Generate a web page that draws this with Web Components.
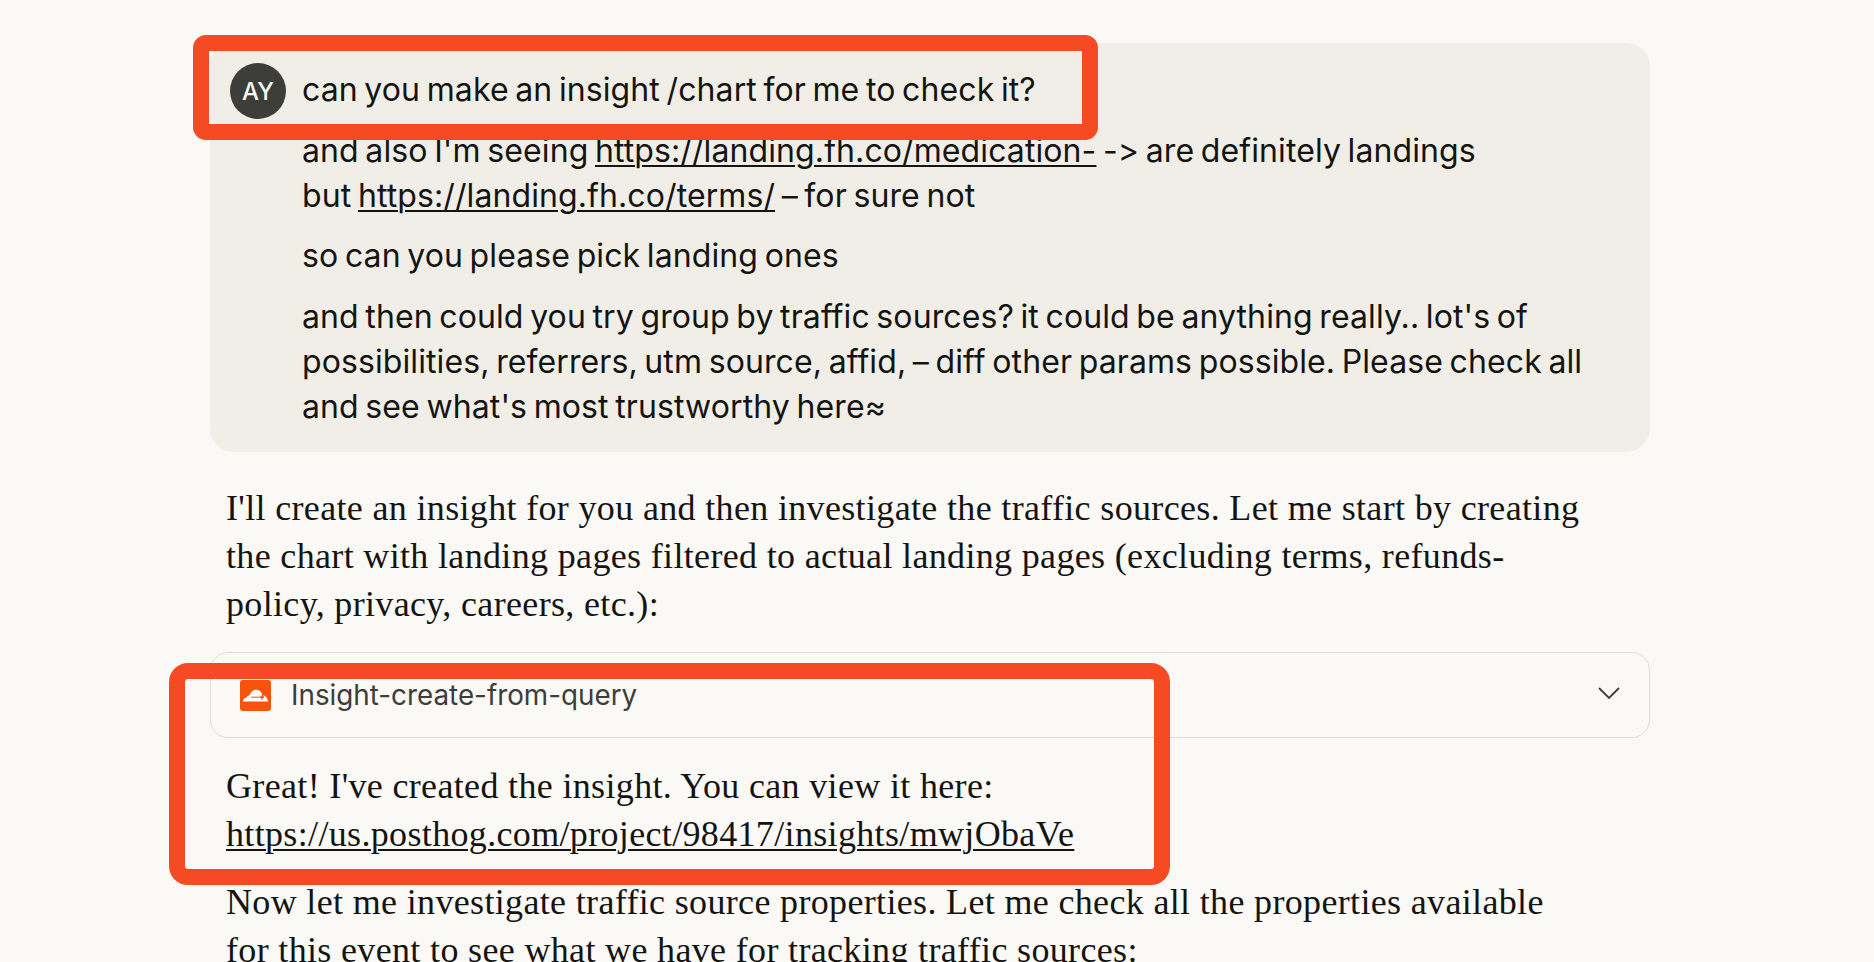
<!DOCTYPE html>
<html lang="en">
<head>
<meta charset="utf-8">
<title>Chat</title>
<style>
  html, body { margin: 0; height: 100%; overflow: hidden; background: #faf9f5; }
  a { color: inherit; text-decoration: underline; text-decoration-thickness: 2px; text-underline-offset: 3px; }
</style>
</head>
<body>
<chat-thread>
  <user-message initials="AY">
    <p>can you make an insight /chart for me to check it?</p>
    <p>and also I'm seeing <a>https://landing.fh.co/medication-</a> -&gt; are definitely landings<br>but <a>https://landing.fh.co/terms/</a> – for sure not</p>
    <p>so can you please pick landing ones</p>
    <p>and then could you try group by traffic sources? it could be anything really.. lot's of<br>possibilities, referrers, utm source, affid, – diff other params possible. Please check all<br>and see what's most trustworthy here≈</p>
  </user-message>
  <assistant-text>I'll create an insight for you and then investigate the traffic sources. Let me start by creating<br>the chart with landing pages filtered to actual landing pages (excluding terms, refunds-<br>policy, privacy, careers, etc.):</assistant-text>
  <tool-card>Insight-create-from-query</tool-card>
  <assistant-text class="flush">Great! I've created the insight. You can view it here:<br><a>https://us.posthog.com/project/98417/insights/mwjObaVe</a></assistant-text>
  <assistant-text class="next">Now let me investigate traffic source properties. Let me check all the properties available<br>for this event to see what we have for tracking traffic sources:</assistant-text>
  <callout-box style="left:193px;top:35px;width:905px;height:105px;--radius:13px"></callout-box>
  <callout-box style="left:169px;top:663px;width:1001px;height:222px"></callout-box>
</chat-thread>

<script>
const threadTemplate = document.createElement('template');
threadTemplate.innerHTML = `
<style>
  :host {
    display: flex;
    flex-direction: column;
    position: relative;
    height: 962px;
    box-sizing: border-box;
    padding: 43px 224px 0 210px;
    overflow: hidden;
  }
  ::slotted(*) { flex: none; }
</style>
<slot></slot>
`;

class ChatThread extends HTMLElement {
  constructor() {
    super();
    this.attachShadow({mode: 'open'});
    this.shadowRoot.appendChild(threadTemplate.content.cloneNode(true));
  }
}

const userTemplate = document.createElement('template');
userTemplate.innerHTML = `
<style>
  :host {
    display: flex;
    gap: 16px;
    padding: 20px 20px 23.5px;
    background: #f0eee6;
    border-radius: 24px;
    color: #141413;
    font-family: "Inter", sans-serif;
    font-size: 32px;
    line-height: 45px;
    letter-spacing: 0.1px;
    word-spacing: -2.5px;
  }
  .avatar {
    flex: none;
    width: 56px;
    height: 56px;
    border-radius: 50%;
    background: #3d3d3a;
    color: #faf9f5;
    font-size: 24px;
    font-weight: 500;
    letter-spacing: 0;
    display: flex;
    align-items: center;
    justify-content: center;
  }
  .body { padding-top: 4px; white-space: nowrap; }
  ::slotted(p) { margin: 0 0 15.5px; }
  ::slotted(p:last-child) { margin-bottom: 0; }
</style>
<div class="avatar"></div>
<div class="body"><slot></slot></div>
`;

class UserMessage extends HTMLElement {
  constructor() {
    super();
    this.attachShadow({mode: 'open'});
    this.shadowRoot.appendChild(userTemplate.content.cloneNode(true));
    this.shadowRoot.querySelector('.avatar').textContent = this.getAttribute('initials');
  }
}

const assistantTemplate = document.createElement('template');
assistantTemplate.innerHTML = `
<style>
  :host {
    display: block;
    margin: 32px 16px 0;
    color: #141413;
    font-family: "Liberation Serif", serif;
    font-size: 36px;
    letter-spacing: 0.34px;
    line-height: 48px;
    white-space: nowrap;
  }
  :host(.flush) { margin-top: 0; }
  :host(.next) { margin-top: 20px; }
</style>
<slot></slot>
`;

class AssistantText extends HTMLElement {
  constructor() {
    super();
    this.attachShadow({mode: 'open'});
    this.shadowRoot.appendChild(assistantTemplate.content.cloneNode(true));
  }
}

const cardTemplate = document.createElement('template');
cardTemplate.innerHTML = `
<style>
  :host {
    display: flex;
    align-items: center;
    box-sizing: border-box;
    height: 86px;
    margin: 24px 0;
    padding: 0 29px;
    gap: 20px;
    border: 1px solid #dfddd6;
    border-radius: 18px;
    color: #3d3d3a;
    font-family: "Inter", sans-serif;
    font-size: 27.8px;
  }
  .label { flex: 1; }
  svg { display: block; flex: none; }
  .chevron { margin-top: -4px; }
</style>
<svg width="31" height="31" viewBox="0 0 31 31">
  <rect width="31" height="31" rx="3" fill="#f6540a"/>
  <path d="M3 21.6C3 19.2 4.700 17.600 6.800 17.500C7 16.200 8.200 15.300 9.500 15.600C10.600 12.200 13 9.800 16 9.800C19.200 9.800 21.600 12 22.300 15C25.400 15 27.600 18 28 21.600Z" fill="#fff"/>
  <path d="M11 17.200H24" stroke="#f6540a" stroke-width="1" fill="none"/>
  <path d="M22.800 15l-1 4.500M20 17.200h4" stroke="#f6540a" stroke-width="1.300" fill="none"/>
</svg>
<span class="label"><slot></slot></span>
<svg class="chevron" width="22" height="12" viewBox="0 0 22 12"><path d="M1 1l10 10L21 1" fill="none" stroke="#3d3d3a" stroke-width="1.800"/></svg>
`;

class ToolCard extends HTMLElement {
  constructor() {
    super();
    this.attachShadow({mode: 'open'});
    this.shadowRoot.appendChild(cardTemplate.content.cloneNode(true));
  }
}

const calloutTemplate = document.createElement('template');
calloutTemplate.innerHTML = `
<style>
  :host {
    position: absolute;
    box-sizing: border-box;
    border: 16px solid #f64a24;
    border-radius: var(--radius, 19px);
  }
</style>
`;

class CalloutBox extends HTMLElement {
  constructor() {
    super();
    this.attachShadow({mode: 'open'});
    this.shadowRoot.appendChild(calloutTemplate.content.cloneNode(true));
  }
}

window.customElements.define('chat-thread', ChatThread);
window.customElements.define('user-message', UserMessage);
window.customElements.define('assistant-text', AssistantText);
window.customElements.define('tool-card', ToolCard);
window.customElements.define('callout-box', CalloutBox);
</script>
</body>
</html>
